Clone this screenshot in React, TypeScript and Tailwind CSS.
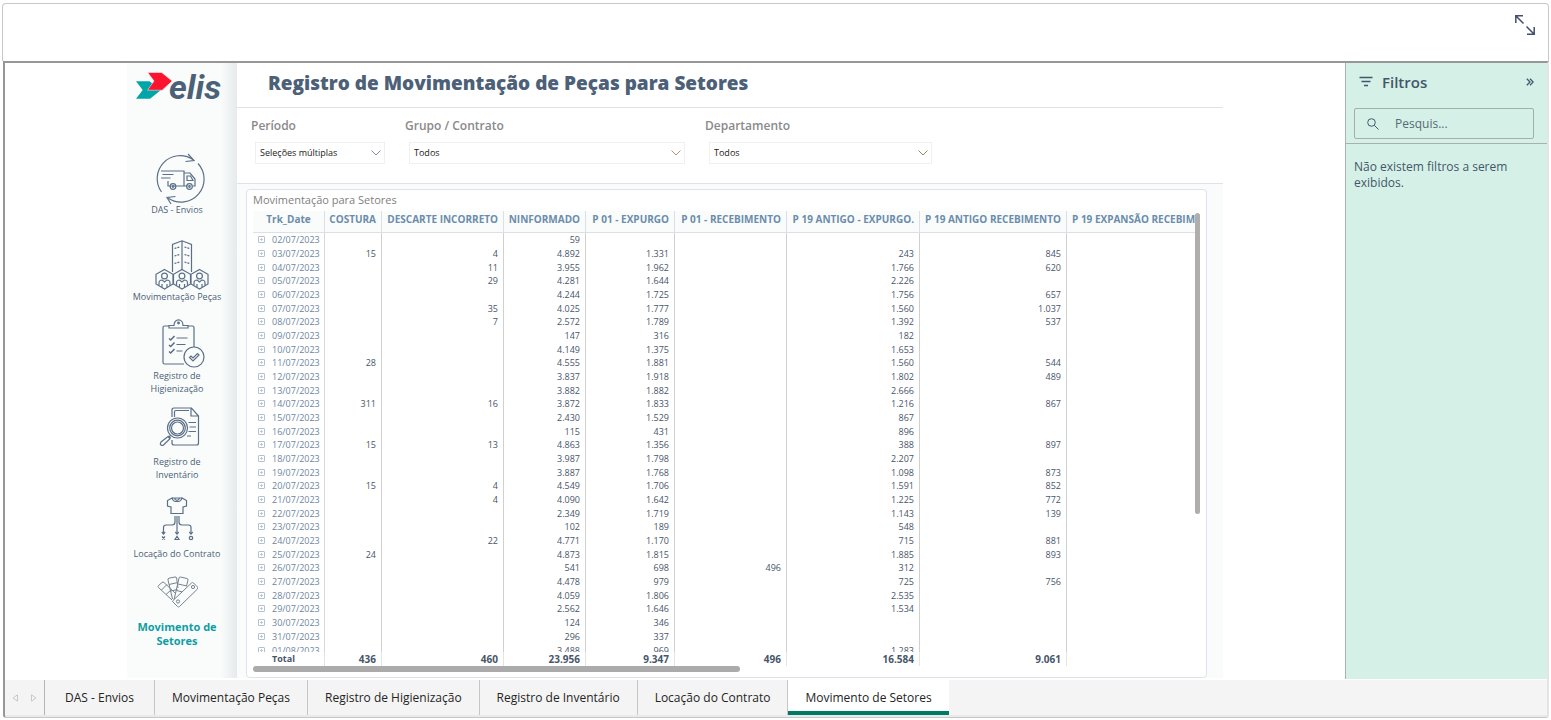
import React from "react";

type Row = [string, string, string, string, string, string, string, string];

const COLUMNS = [
  "COSTURA",
  "DESCARTE INCORRETO",
  "NINFORMADO",
  "P 01 - EXPURGO",
  "P 01 - RECEBIMENTO",
  "P 19 ANTIGO - EXPURGO.",
  "P 19 ANTIGO RECEBIMENTO",
  "P 19 EXPANSÃO RECEBIMENTO",
];

const ROWS: Row[] = [
  ["02/07/2023", "", "", "59", "", "", "", ""],
  ["03/07/2023", "15", "4", "4.892", "1.331", "", "243", "845"],
  ["04/07/2023", "", "11", "3.955", "1.962", "", "1.766", "620"],
  ["05/07/2023", "", "29", "4.281", "1.644", "", "2.226", ""],
  ["06/07/2023", "", "", "4.244", "1.725", "", "1.756", "657"],
  ["07/07/2023", "", "35", "4.025", "1.777", "", "1.560", "1.037"],
  ["08/07/2023", "", "7", "2.572", "1.789", "", "1.392", "537"],
  ["09/07/2023", "", "", "147", "316", "", "182", ""],
  ["10/07/2023", "", "", "4.149", "1.375", "", "1.653", ""],
  ["11/07/2023", "28", "", "4.555", "1.881", "", "1.560", "544"],
  ["12/07/2023", "", "", "3.837", "1.918", "", "1.802", "489"],
  ["13/07/2023", "", "", "3.882", "1.882", "", "2.666", ""],
  ["14/07/2023", "311", "16", "3.872", "1.833", "", "1.216", "867"],
  ["15/07/2023", "", "", "2.430", "1.529", "", "867", ""],
  ["16/07/2023", "", "", "115", "431", "", "896", ""],
  ["17/07/2023", "15", "13", "4.863", "1.356", "", "388", "897"],
  ["18/07/2023", "", "", "3.987", "1.798", "", "2.207", ""],
  ["19/07/2023", "", "", "3.887", "1.768", "", "1.098", "873"],
  ["20/07/2023", "15", "4", "4.549", "1.706", "", "1.591", "852"],
  ["21/07/2023", "", "4", "4.090", "1.642", "", "1.225", "772"],
  ["22/07/2023", "", "", "2.349", "1.719", "", "1.143", "139"],
  ["23/07/2023", "", "", "102", "189", "", "548", ""],
  ["24/07/2023", "", "22", "4.771", "1.170", "", "715", "881"],
  ["25/07/2023", "24", "", "4.873", "1.815", "", "1.885", "893"],
  ["26/07/2023", "", "", "541", "698", "496", "312", ""],
  ["27/07/2023", "", "", "4.478", "979", "", "725", "756"],
  ["28/07/2023", "", "", "4.059", "1.806", "", "2.535", ""],
  ["29/07/2023", "", "", "2.562", "1.646", "", "1.534", ""],
  ["30/07/2023", "", "", "124", "346", "", "", ""],
  ["31/07/2023", "", "", "296", "337", "", "", ""],
  ["01/08/2023", "", "", "3.488", "969", "", "1.283", ""],
];

const TOTALS = ["436", "460", "23.956", "9.347", "496", "16.584", "9.061"];

function Logo() {
  return (
    <svg className="h-9 w-24" viewBox="0 0 96 36" role="img" aria-label="elis">
      <path d="M7 14.300h13.500L32 23 21 31.700H7L13.700 23z" fill="#00a5a8" />
      <path d="M18.700 5.500h14L43.200 14 33.200 23.200H18.500L25 14z" fill="#fb1430" stroke="#fafcfb" strokeWidth=".5" />
      <text
        x="40"
        y="31.500"
        fill="#4c6078"
        fontFamily="Roboto, sans-serif"
        fontSize="34"
        fontWeight="700"
        fontStyle="italic"
      >
        elis
      </text>
    </svg>
  );
}

function TruckIcon() {
  return (
    <svg className="-mb-0.5 h-[52px] w-[58px]" viewBox="-8 0 58 52" fill="none" stroke="#5b6f88" strokeWidth="1.200">
      <path d="M5.500 39A23 23 0 0 1 37 6.500M42 10.500A23 23 0 0 1 12 45" />
      <path d="M32 1l6 6.500-8.500 1M15 51l-4-6.500 8.500-1" />
      <path d="M9 18h19v15H18M12 28v5h3.500M28 20h6l5 6v7h-2M31.500 33H28M31 23h3.500l2.500 4.500h-6zM5 18h6M6.500 21.500h11M5 25h9.500" />
      <circle cx="17" cy="33.500" r="2.800" />
      <circle cx="33.500" cy="33.500" r="2.800" />
      <circle cx="17" cy="33.500" r=".8" />
      <circle cx="33.500" cy="33.500" r=".8" />
    </svg>
  );
}

function Person({ x }: { x: number }) {
  return (
    <g transform={`translate(${x} 0)`}>
      <path d="M9 29.500l8.500 4.800v9.700L9 49l-8.500-5v-9.700z" />
      <circle cx="9" cy="36" r="2.900" />
      <path d="M3.500 45.500v-2.500c0-2 1.500-3 3.200-3L9 42l2.300-2c1.700 0 3.200 1 3.200 3v2.500M6.500 44v3M11.500 44v3" />
    </g>
  );
}

function BuildingIcon() {
  return (
    <svg className="h-[50px] w-[64px]" viewBox="-10 0 64 50" fill="none" stroke="#5b6f88" strokeWidth="1.200">
      <path d="M17.500 32V4.500L27 .8l9.500 3.700V32M27 1v29" />
      <path d="M19.500 8.500l5-1.500M29.500 7l5 1.500M19.500 16l5-1.500M29.500 14.500l5 1.500M19.500 23.500l5-1.500M29.500 22l5 1.500" strokeDasharray="2 1" />
      <Person x={0.5} />
      <Person x={18} />
      <Person x={35.5} />
    </svg>
  );
}

function ClipboardIcon() {
  return (
    <svg className="h-[50px] w-[56px]" viewBox="-13 0 56 50" fill="none" stroke="#5b6f88" strokeWidth="1.200">
      <path d="M7 7H2.500Q1 7 1 8.500v35Q1 45 2.500 45H22M26 7h4.500Q32 7 32 8.500V28" />
      <path d="M7 9V6.500h5C12 3 14 .8 16.500.8S21 3 21 6.500h5V9z" />
      <circle cx="16.500" cy="4" r=".8" fill="#5b6f88" />
      <path d="M14.500 19h11M14.500 25.500h9M14.500 32h6" />
      <path d="M7 19.500l1.700 1.500 3.800-4M7 26l1.700 1.500 3.800-4M7 32.500L8.700 34l3.800-4" strokeWidth="1.600" />
      <circle cx="32" cy="38" r="10" fill="#fafcfb" />
      <path d="M27.500 38.500l1.500-1.500 2 2 4.500-4.500 1.500 1.500-6 6z" />
    </svg>
  );
}

function InventoryIcon() {
  return (
    <svg className="mb-2 h-10 w-[46px]" viewBox="-5 0 46 40" fill="none" stroke="#5b6f88" strokeWidth="1.200">
      <path d="M13 10V3q0-2 2-2h17.500l7 8v27q0 2-2 2H15q-2 0-2-2v-3M32 1.500V9h7M15.500 10V5q0-1.500 1.500-1.500h13" />
      <path d="M29.500 15.500H37M30.500 20H37M29.500 24.500H37M28 29h4" />
      <circle cx="18.500" cy="21" r="10" fill="#fafcfb" />
      <circle cx="18.500" cy="21" r="7.800" />
      <circle cx="18.500" cy="21" r="6" />
      <path d="M11.500 28.500L9.500 30.500M9.500 29l2 2M9 29.500l2 2.300L4.500 38q-1.200 1-2.500 0t0-3z" />
    </svg>
  );
}

function ContractIcon() {
  return (
    <svg className="mb-1.5 h-[44px] w-[34px]" viewBox="0 0 34 44" fill="none" stroke="#5b6f88" strokeWidth="1.200">
      <path d="M12 1L7.500 3.500V9l3.500 1V16.500h12V10l3.500-1V3.500L22 1c-1 3-2 3.500-5 3.500S13 4 12 1zM12 1h10M14.500 1c.5 2 1.300 2.300 2.500 2.300S19 3 19.500 1" />
      <path d="M15 19v6q0 3-3 3H6q-2.500 0-2.500 2.500V36M17 19v17M19 19v6q0 3 3 3h6.500q2.500 0 2.500 2.500V36" />
      <path d="M1.800 35l1.700 2 1.700-2M15.300 35l1.700 2 1.700-2M29.300 35l1.700 2 1.700-2M2 39.500l3 3M5 39.500l-3 3M17 39.300l2 3.200h-4z" />
      <circle cx="31" cy="41" r="1.700" />
    </svg>
  );
}

function PaletteIcon() {
  return (
    <svg className="mb-3 h-8 w-[42px]" viewBox="-1 0 42 32" fill="none" stroke="#76828f" strokeWidth="1">
      <path d="M15 24L1.500 11.500q-1-1 0-2L5 6.500q1-1 2 0L18 17M4.500 14l5.500-5.500M9 18.500l5.500-5" />
      <path d="M15.500 23L11 4q-.3-1.500 1-1.800L18 1q1.300-.3 1.600 1L21 12M12 8.500l8-1.800M13.500 15l7-1.500" />
      <path d="M17 24l5-22q.3-1.300 1.600-1L30 2.500q1.300.3 1 1.600L29.500 10M21 8l9 2M19.500 14.500l6 1.500" />
      <path d="M16 24.500L34.500 7q1-1 2 0l4 4q1 1 0 2L22.500 30.500q-1 1-2 0L16 26q-1-.8 0-1.500z" fill="#fafcfb" />
      <circle cx="36" cy="11" r="1.600" />
      <circle cx="21" cy="25.500" r="1.600" />
    </svg>
  );
}

const NAV = [
  { label: "DAS - Envios", icon: <TruckIcon />, gap: "mt-[50px]" },
  { label: "Movimentação Peças", icon: <BuildingIcon />, gap: "mt-6" },
  { label: "Registro de Higienização", icon: <ClipboardIcon />, gap: "mt-4" },
  { label: "Registro de Inventário", icon: <InventoryIcon />, gap: "mt-3" },
  { label: "Locação do Contrato", icon: <ContractIcon />, gap: "mt-4" },
  { label: "Movimento de Setores", icon: <PaletteIcon />, gap: "mt-4", active: true },
];

const SLICERS = [
  { id: "periodo", label: "Período", value: "Seleções múltiplas", width: "w-[134px]", arrow: "text-[#8a86c0]" },
  { id: "grupo", label: "Grupo / Contrato", value: "Todos", width: "w-[280px]", arrow: "text-[#c98a72]" },
  { id: "departamento", label: "Departamento", value: "Todos", width: "w-[227px]", arrow: "text-[#8b8b62]" },
];

const TABS = [
  "DAS - Envios",
  "Movimentação Peças",
  "Registro de Higienização",
  "Registro de Inventário",
  "Locação do Contrato",
  "Movimento de Setores",
];

function Sidebar() {
  return (
    <nav className="flex w-[110px] shrink-0 flex-col items-center bg-linear-to-r from-[#fafcfb] from-85% to-[#e6eaec] pt-1 pr-2.5">
      <Logo />
      {NAV.map((item) => (
        <a
          key={item.label}
          href="#"
          className={`flex w-full flex-col items-center text-center ${item.gap} ${
            item.active
              ? "px-2 text-[11px] leading-[14px] font-bold text-[#0e9ea3]"
              : "text-[9px] leading-[13px] text-[#4c5f78]"
          }`}
        >
          {item.icon}
          <span className={item.label.startsWith("Registro") ? "w-16" : "whitespace-nowrap"}>
            {item.active ? (
              <>
                Movimento de
                <br />
                Setores
              </>
            ) : (
              item.label
            )}
          </span>
        </a>
      ))}
    </nav>
  );
}

function Slicers() {
  return (
    <div className="flex h-[76px] gap-5 border-b border-[#dfe2ea] pt-3 pl-3.5">
      {SLICERS.map((s) => (
        <div key={s.id} className={s.width}>
          <label htmlFor={s.id} className="block text-[12px] leading-3 font-semibold text-[#8a8a8a]">
            {s.label}
          </label>
          <div className="relative mt-2.5 ml-1">
            <select
              id={s.id}
              className="block h-[22px] w-full appearance-none border border-[#f0f0f0] bg-white pl-1 text-[9px] text-[#212121]"
            >
              <option>{s.value}</option>
            </select>
            <svg
              className={`pointer-events-none absolute top-2 right-1 h-1.5 w-2.5 ${s.arrow}`}
              viewBox="0 0 10 6"
              fill="none"
              stroke="currentColor"
            >
              <path d="M.5.5L5 5 9.500.5" />
            </svg>
          </div>
        </div>
      ))}
    </div>
  );
}

function ExpandButton({ label }: { label: string }) {
  return (
    <button type="button" aria-label={`Expandir ${label}`} className="block size-[7px]">
      <svg className="size-[7px]" viewBox="0 0 7 7" fill="none" stroke="#b3c1d0">
        <rect x=".5" y=".5" width="6" height="6" rx=".5" />
        <path d="M2 3.500h3M3.500 2v3" strokeOpacity=".8" />
      </svg>
    </button>
  );
}

function Matrix() {
  return (
    <div className="mt-[5px] ml-[9px] w-[961px] max-w-full min-w-0 rounded-[4px] border border-[#dde3ea] bg-white pr-1.5 pb-[5px] pl-1.5">
      <h2 className="h-[21px] text-[11px] leading-5 text-[#808080]">Movimentação para Setores</h2>
      <div className="flex">
        <div className="h-[455px] min-w-0 flex-1 overflow-hidden">
          <table className="h-[460px] w-[1000px] table-fixed border-separate border-spacing-0 text-[#47566b]">
            <colgroup>
              <col className="w-[72px]" />
              <col className="w-[57px]" />
              <col className="w-[122px]" />
              <col className="w-[82px]" />
              <col className="w-[89px]" />
              <col className="w-[112px]" />
              <col className="w-[133px]" />
              <col className="w-[147px]" />
              <col />
            </colgroup>
            <thead className="sticky top-0 text-[10px] leading-4 font-bold text-[#6b8cac]">
              <tr className="h-[22px]">
                <th className="border-r border-b border-[#dcdfe4] bg-[#fafcfb] p-0 pb-1 align-top">Trk_Date</th>
                {COLUMNS.map((c) => (
                  <th
                    key={c}
                    className="border-r border-b border-[#dcdfe4] bg-[#fafcfb] p-0 pr-[5px] pb-1 pl-1 text-right align-top whitespace-nowrap last:pl-[5px] last:text-left"
                  >
                    {c}
                  </th>
                ))}
              </tr>
            </thead>
            <tbody className="text-[9px] leading-[13px]">
              {ROWS.map(([date, ...values]) => (
                <tr key={date}>
                  <th className="border-r border-[#d5d7da] p-0 font-normal text-[#6d86a0]">
                    <div className="flex items-center gap-[7px] pl-[5px]">
                      <ExpandButton label={date} />
                      {date}
                    </div>
                  </th>
                  {values.map((v, i) => (
                    <td key={i} className="border-r border-[#d0d0d0] p-0 pr-[5px] text-right">
                      {v}
                    </td>
                  ))}
                  <td />
                </tr>
              ))}
            </tbody>
            <tfoot className="sticky bottom-0 text-[10px] leading-[14px] font-bold">
              <tr className="h-[14px]">
                <th className="border-r border-[#e4e4e4] bg-white p-0 pl-[19px] text-left text-[9px]">Total</th>
                {TOTALS.map((t, i) => (
                  <td key={i} className="border-r border-[#e4e4e4] bg-white p-0 pr-[5px] text-right">
                    {t}
                  </td>
                ))}
                <td className="bg-white" />
              </tr>
            </tfoot>
          </table>
        </div>
        <div className="mt-0.5 h-[301px] w-[5px] rounded-full bg-[#b0aeac]" />
      </div>
      <div className="h-[6px] w-[487px] rounded-full bg-[#ababab]" />
    </div>
  );
}

function FilterPane() {
  return (
    <aside className="w-[202px] shrink-0 border-l border-[#a9b5b0] bg-[#d5f1e7] text-[#43566a]">
      <div className="border-b border-[#a9b0ad] px-2 pt-[7px] pb-1">
        <div className="flex h-6 items-center pr-[5px] pl-[5px]">
          <svg className="h-3 w-[14px]" viewBox="0 0 14 12" fill="none" stroke="#43566a" strokeWidth="1.300">
            <path d="M.5 1.500h13M2.500 5.500h9M5 9.500h4" />
          </svg>
          <h2 className="ml-[9px] flex-1 text-[15px] leading-5 font-semibold">Filtros</h2>
          <button type="button" aria-label="Recolher filtros">
            <svg className="h-2 w-2" viewBox="0 0 8 8" fill="none" stroke="#43566a" strokeWidth="1.300">
              <path d="M.8.8L4 4 .8 7.200M4 .8L7.200 4 4 7.200" />
            </svg>
          </button>
        </div>
        <label className="mt-3.5 mr-[5px] flex h-[31px] items-center rounded-[2px] border border-[#a5aeaa] pl-3">
          <svg className="size-3 shrink-0" viewBox="0 0 12 12" fill="none" stroke="#43566a">
            <circle cx="4.500" cy="4.500" r="3.800" />
            <path d="M7.300 7.300l4.200 4.200" />
          </svg>
          <input
            type="search"
            aria-label="Pesquisar"
            placeholder="Pesquis..."
            className="ml-4 w-full min-w-0 bg-transparent text-[12px] outline-none placeholder:text-[#566a78]"
          />
        </label>
      </div>
      <p className="px-2 pt-[15px] text-[12px] leading-4">Não existem filtros a serem exibidos.</p>
    </aside>
  );
}

function TabBar() {
  return (
    <div className="flex h-9 border-t border-white bg-[#f4f4f4] text-[12px] text-[#252423]">
      <div className="flex w-10 shrink-0 items-center justify-around border-r border-[#b3b3b3]">
        <button type="button" aria-label="Página anterior">
          <svg className="h-2 w-1.5" viewBox="0 0 6 8" fill="none" stroke="#c8c8c8">
            <path d="M5.500.8v6.400L1 4z" />
          </svg>
        </button>
        <button type="button" aria-label="Próxima página">
          <svg className="h-2 w-1.5" viewBox="0 0 6 8" fill="none" stroke="#c8c8c8">
            <path d="M.5.8v6.400L5 4z" />
          </svg>
        </button>
      </div>
      {TABS.map((tab, i) => (
        <button
          key={tab}
          type="button"
          className={
            i === TABS.length - 1
              ? "border-b-4 border-[#007a64] bg-white px-[17px] pt-1 whitespace-nowrap"
              : "border-r border-[#c6c6c6] px-[17px] whitespace-nowrap first-of-type:px-5"
          }
        >
          {tab}
        </button>
      ))}
    </div>
  );
}

export default function App() {
  return (
    <div className="flex min-h-screen flex-col bg-white pt-[3px] pr-0.5 pb-0.5 pl-0.5 font-['Open_Sans','Noto_Sans',sans-serif]">
      <header className="flex h-[58px] justify-end rounded-t-[4px] border border-b-0 border-[#c8c8c8] pt-[11px] pr-[13px]">
        <button type="button" aria-label="Tela cheia" className="size-5">
          <svg className="size-5" viewBox="0 0 20 20" fill="none" stroke="#444f6d" strokeWidth="1.500">
            <path d="M8.500 8.500L1 1M.8 8V.8H8M11.500 11.500L19 19M19.200 12v7.200H12" />
          </svg>
        </button>
      </header>
      <div className="ml-px flex flex-1 flex-col rounded-b-[3px] border-t-2 border-r-2 border-b border-l-2 border-t-[#979797] border-r-[#e4e4e4] border-b-[#c8c8c8] border-l-[#979797] bg-[#eaeaea] pb-0.5">
        <div className="flex flex-1 bg-white">
          <main className="flex min-w-0 flex-1 items-start justify-center">
            <div className="flex w-full max-w-[1096px]">
              <Sidebar />
              <div className="min-w-0 flex-1 bg-[#fafcfb]">
                <div className="bg-white">
                  <h1 className="h-[45px] border-b border-[#dfe2ea] pl-[31px] text-[19px] leading-10 font-extrabold text-[#4c6078]">
                    Registro de Movimentação de Peças para Setores
                  </h1>
                  <Slicers />
                </div>
                <Matrix />
              </div>
            </div>
          </main>
          <FilterPane />
        </div>
        <TabBar />
      </div>
    </div>
  );
}
